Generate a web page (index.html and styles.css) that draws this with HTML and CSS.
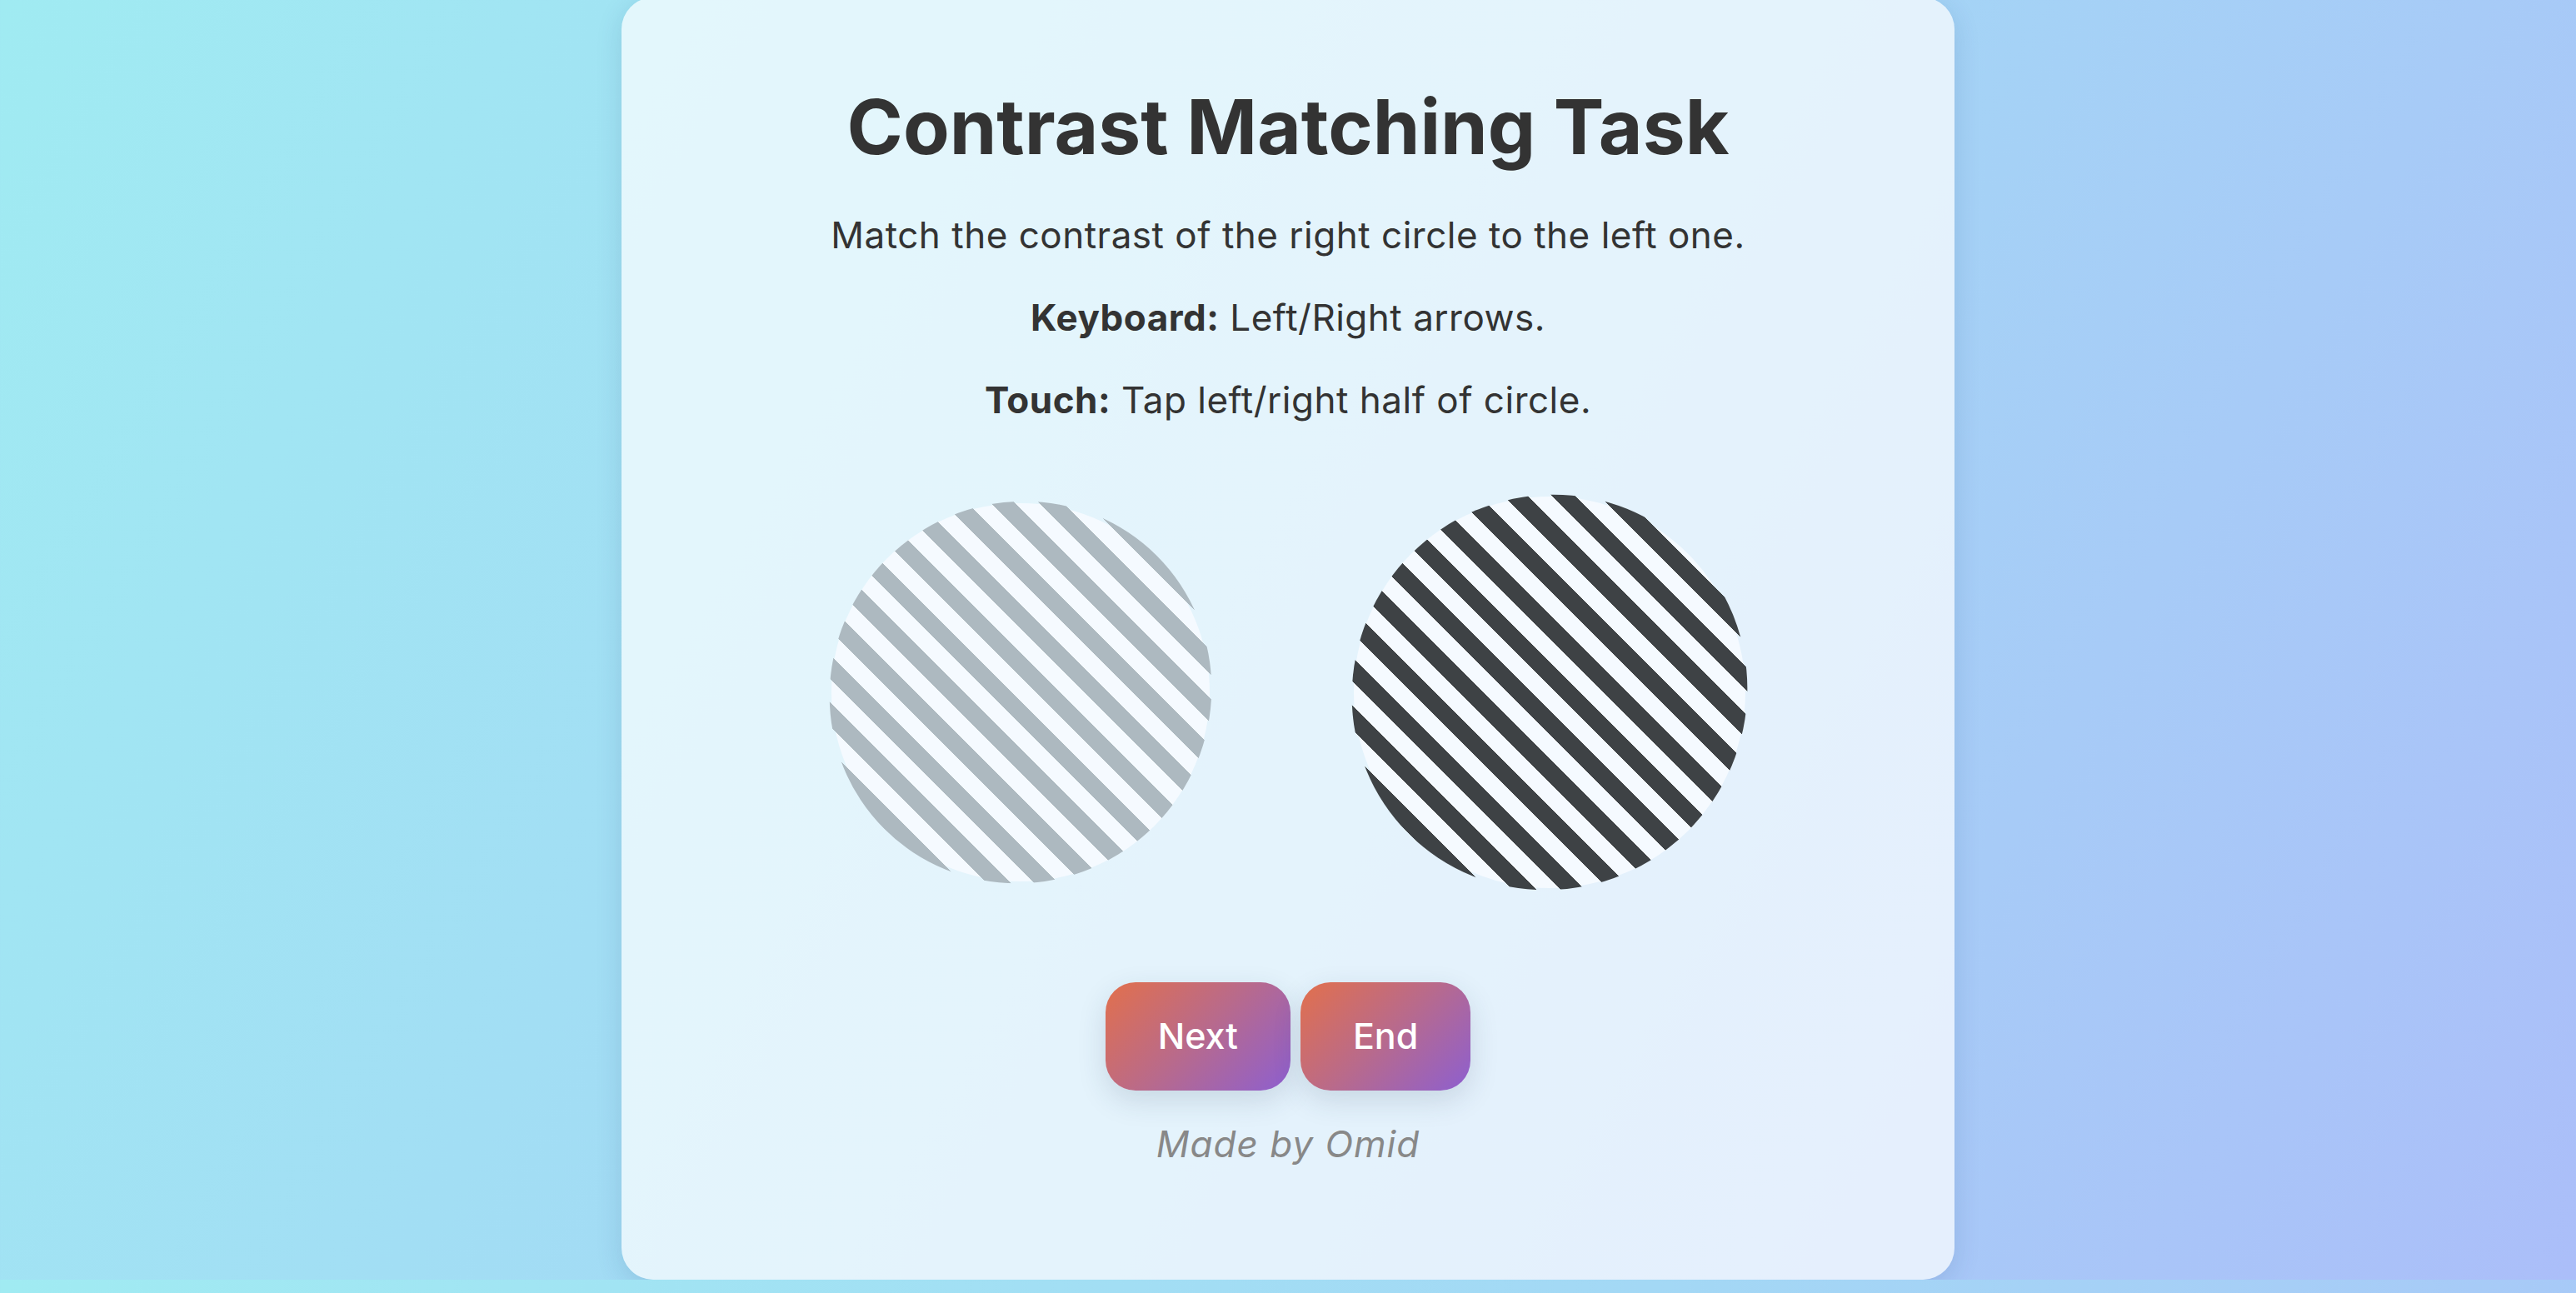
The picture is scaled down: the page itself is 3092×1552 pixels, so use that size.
FILE: index.html
```html
<!DOCTYPE html>
<html lang="en">
<head>
<meta charset="utf-8">
<title>Contrast Matching Task</title>
<link rel="stylesheet" href="styles.css">
</head>
<body>
  <main class="card">
    <h1 class="title">Contrast Matching Task</h1>
    <p class="lead">Match the contrast of the right circle to the left one.</p>
    <p class="lead"><strong>Keyboard:</strong> Left/Right arrows.</p>
    <p class="lead"><strong>Touch:</strong> Tap left/right half of circle.</p>

    <div class="stimuli">
      <div class="stim stim--ref"></div>
      <div class="stim stim--adj"></div>
    </div>

    <div class="actions">
      <button class="btn btn--next" type="button">Next</button>
      <button class="btn btn--end" type="button">End</button>
    </div>

    <p class="credit">Made by Omid</p>
  </main>
</body>
</html>
```

FILE: styles.css
```css
body {
  margin: 0;
  background: linear-gradient(120deg, #a0ebf2 0%, #a3d8f5 50%, #abbef9 100%);
  display: flex;
  justify-content: center;
  font-family: "Inter", "Liberation Sans", sans-serif;
  color: #333333;
}

.card {
  width: 1600px;
  margin-top: -3px;
  box-sizing: border-box;
  padding: 101px 0 130px;
  background: rgba(255, 255, 255, 0.7);
  border-radius: 38px;
  box-shadow: 0 8px 32px rgba(20, 60, 110, 0.14);
  display: flex;
  flex-direction: column;
  align-items: center;
  text-align: center;
}

.title {
  margin: 0;
  font-size: 91px;
  line-height: 1.2;
  font-weight: 700;
  letter-spacing: 0;
  color: #333333;
}

.lead {
  margin: 42px 0 0;
  font-size: 44px;
  line-height: 1.5;
  font-weight: 400;
  letter-spacing: 0.5px;
}

.lead + .lead {
  margin-top: 33px;
}

.lead strong {
  font-weight: 700;
}

.stimuli {
  margin-top: 82px;
  height: 471px;
  display: flex;
  align-items: center;
  gap: 173px;
}

.stim {
  position: relative;
  border-radius: 50%;
  background: #f5faff;
  flex: none;
}

.stim::before {
  content: "";
  position: absolute;
  inset: 0;
  border-radius: 50%;
  background: repeating-linear-gradient(90deg, var(--ink) 0 20px, transparent 20px 40px);
  transform: rotate(-45deg) scaleX(1.02);
}

.stim--ref {
  width: 454px;
  height: 454px;
  --ink: #adb9c0;
}

.stim--adj {
  width: 470px;
  height: 470px;
  --ink: #3e4245;
}

.actions {
  margin-top: 113px;
  display: flex;
  gap: 12px;
}

.btn {
  border: none;
  border-radius: 36px;
  padding: 39px 63px;
  font-family: "Inter", "Liberation Sans", sans-serif;
  font-size: 43px;
  line-height: 1.2;
  font-weight: 500;
  color: #ffffff;
  background: linear-gradient(135deg, #e2704c 0%, #b86a8c 50%, #8d5fd0 100%);
  box-shadow: 0 12px 34px rgba(40, 60, 90, 0.15);
  cursor: pointer;
}

.credit {
  margin: 31px 0 0;
  font-size: 44px;
  line-height: 1.5;
  font-style: italic;
  letter-spacing: 1px;
  color: #888888;
}
```
